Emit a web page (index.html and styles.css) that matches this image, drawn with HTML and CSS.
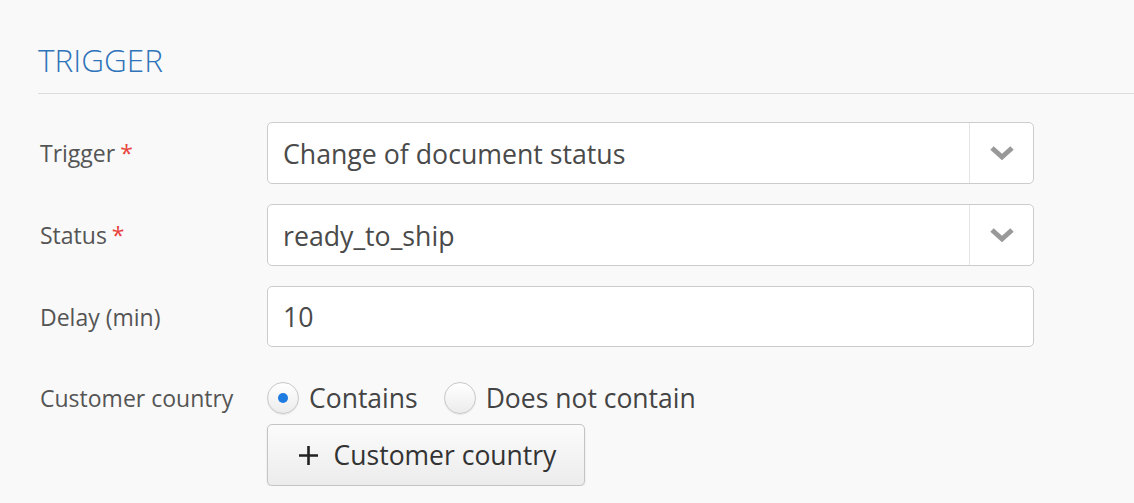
FILE: index.html
```html
<!DOCTYPE html>
<html>
<head>
<meta charset="utf-8">
<link rel="stylesheet" href="styles.css">
</head>
<body>
<div class="panel">
  <h2 class="title">TRIGGER</h2>
  <div class="form">
    <div class="label">Trigger <span class="req">*</span></div>
    <div class="select">
      <span class="value">Change of document status</span>
      <span class="arrow"><svg width="26" height="16" viewBox="0 0 26 16"><path d="M3 3 L13 12 L23 3" fill="none" stroke="#999" stroke-width="5" stroke-linejoin="miter"/></svg></span>
    </div>

    <div class="label">Status <span class="req">*</span></div>
    <div class="select">
      <span class="value">ready_to_ship</span>
      <span class="arrow"><svg width="26" height="16" viewBox="0 0 26 16"><path d="M3 3 L13 12 L23 3" fill="none" stroke="#999" stroke-width="5" stroke-linejoin="miter"/></svg></span>
    </div>

    <div class="label">Delay (min)</div>
    <div class="input"><span class="value">10</span></div>

    <div class="label label-top">Customer country</div>
    <div class="country">
      <div class="radios">
        <label class="radio"><span class="circle checked"></span>Contains</label>
        <label class="radio"><span class="circle"></span>Does not contain</label>
      </div>
      <button class="btn"><svg class="plus" width="21" height="21" viewBox="0 0 21 21"><path d="M10.5 1 V20 M1 10.5 H20" stroke="#222" stroke-width="2.6" fill="none"/></svg>Customer country</button>
    </div>
  </div>
</div>
</body>
</html>
```
FILE: styles.css
```css
html, body {
  margin: 0;
  padding: 0;
  background: #f9f9f9;
  font-family: "Open Sans", "Liberation Sans", sans-serif;
}
.panel {
  padding: 38px 0 0 38px;
}
.title {
  margin: 0;
  font-size: 31.5px;
  font-weight: 300;
  color: #2f73b9;
  line-height: 44px;
  padding-bottom: 11px;
  border-bottom: 1px solid #dddddd;
}
.form {
  display: grid;
  grid-template-columns: 229px 767px;
  row-gap: 20px;
  margin-top: 28px;
}
.label {
  font-size: 23px;
  color: #555;
  display: flex;
  align-items: center;
  padding-left: 2px;
}
.label-top {
  align-items: flex-start;
  padding-top: 15px;
}
.req {
  color: #e8423a;
  margin-left: 5px;
}
.select, .input {
  height: 60px;
  border: 1px solid #cccccc;
  border-radius: 5px;
  background: #fff;
  display: flex;
  align-items: center;
}
.input {
  height: 59px;
}
.value {
  flex: 1;
  font-size: 26.7px;
  color: #4a4a4a;
  padding-left: 15px;
}
.arrow {
  width: 63px;
  height: 100%;
  border-left: 1px solid #e4e4e4;
  display: flex;
  align-items: center;
  justify-content: center;
}
.country {
  display: flex;
  flex-direction: column;
  align-items: flex-start;
  padding-top: 13px;
  gap: 8px;
}
.radios {
  display: flex;
  gap: 26px;
  height: 36px;
}
.radio {
  display: flex;
  align-items: center;
  font-size: 26.5px;
  color: #444;
  gap: 10px;
}
.circle {
  width: 30px;
  height: 30px;
  border-radius: 50%;
  border: 1px solid #c8c8c8;
  background: linear-gradient(#ffffff, #ececec);
  box-shadow: 0 1px 1px rgba(0,0,0,0.08);
  position: relative;
}
.circle.checked::after {
  content: "";
  position: absolute;
  left: 10px;
  top: 10px;
  width: 10px;
  height: 10px;
  border-radius: 50%;
  background: #1e7be0;
}
.btn {
  font-family: inherit;
  font-size: 26.5px;
  color: #333;
  height: 62px;
  width: 318px;
  border: 1px solid #c4c4c4;
  border-radius: 5px;
  background: linear-gradient(#fbfbfb, #ececec);
  box-shadow: 0 1px 2px rgba(0,0,0,0.12);
  display: flex;
  align-items: center;
  justify-content: center;
  padding: 0 0 0 2px;
}
.plus {
  margin-right: 15px;
}
```
